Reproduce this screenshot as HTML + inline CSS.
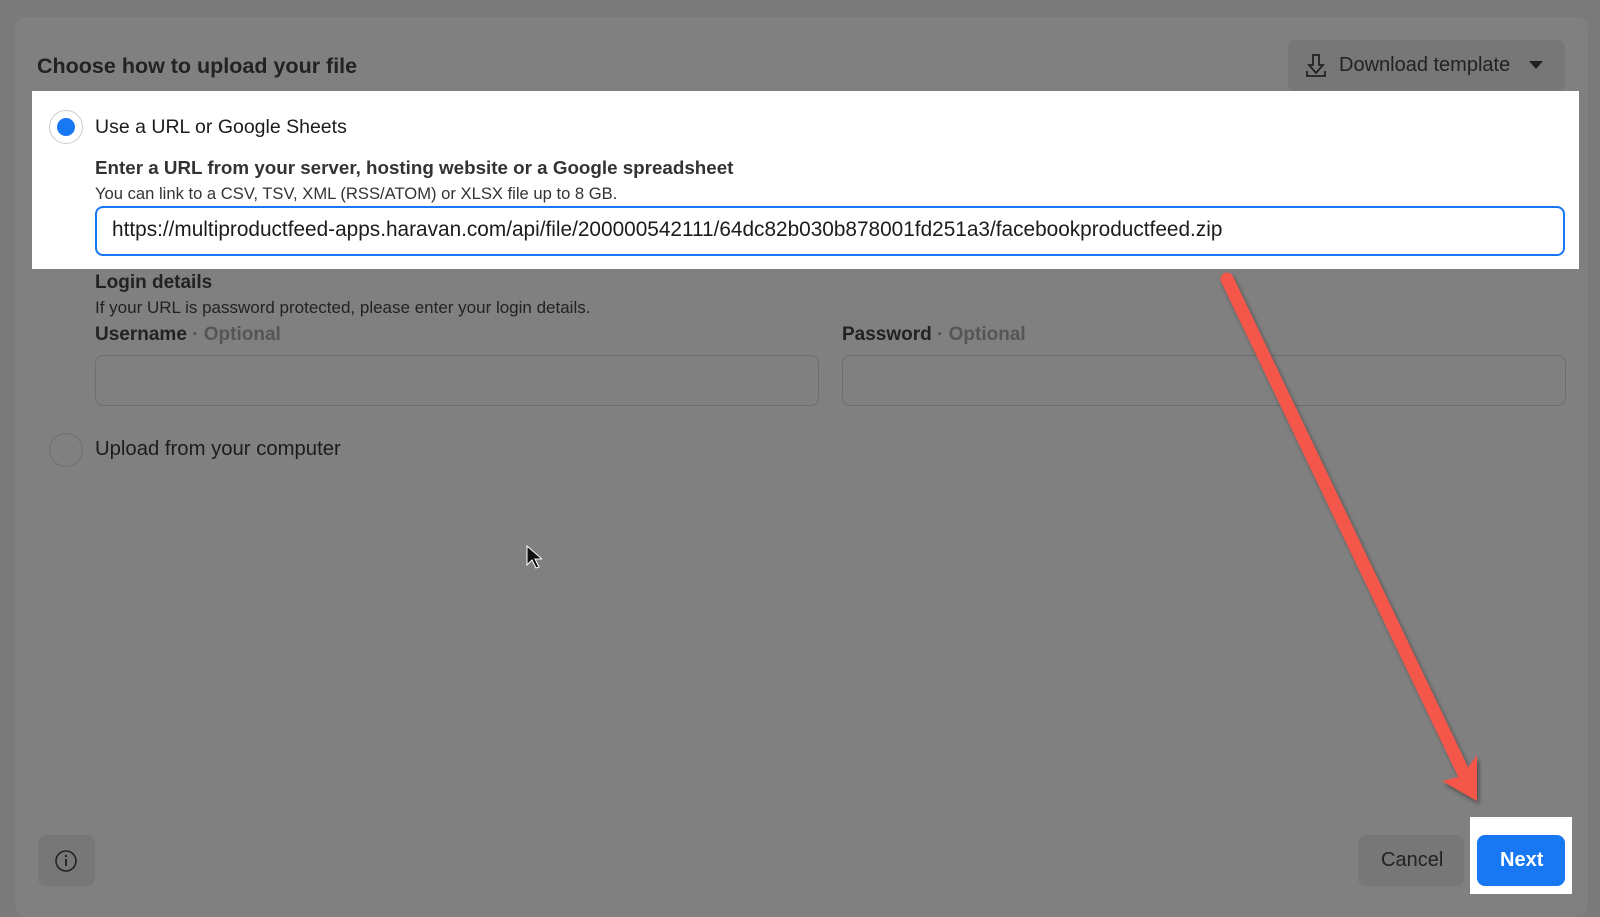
<!DOCTYPE html>
<html><head><meta charset="utf-8"><style>
*{box-sizing:border-box;margin:0;padding:0}
body{width:1600px;height:894px;overflow:hidden;background:#7a7a7a;font-family:"Liberation Sans",Arial,sans-serif;position:relative;color:#1c1c1c}
.panel{position:absolute;left:15px;top:17px;width:1573px;height:900px;background:#808080;border-radius:12px}
.a{position:absolute;white-space:nowrap}
.white{position:absolute;left:32px;top:91px;width:1547px;height:178px;background:#fff}
.radio{position:absolute;width:34px;height:34px;border-radius:50%;border:1.5px solid #ccc}
.inp{position:absolute;border:1.5px solid #6e6e6e;border-radius:8px}
</style></head><body>
<div class="panel"></div>
<div class="a" style="left:37px;top:54px;font-size:21.5px;font-weight:bold;color:#222">Choose how to upload your file</div>
<div class="a" style="left:1288px;top:40px;width:277px;height:51px;background:#777;border-radius:8px"></div>
<svg class="a" style="left:1305px;top:53px" width="22" height="26" viewBox="0 0 22 26"><path d="M8 2h6v10h4l-7 8-7-8h4z" fill="none" stroke="#222" stroke-width="1.8"/><path d="M2 18v5h18v-5" fill="none" stroke="#222" stroke-width="1.8"/></svg>
<div class="a" style="left:1339px;top:54px;font-size:20px;color:#222">Download template</div>
<svg class="a" style="left:1529px;top:61px" width="14" height="9"><path d="M0 0h14L7 8z" fill="#222"/></svg>
<div class="white"></div>
<div class="radio" style="left:49px;top:110px;background:#fff"></div>
<div class="a" style="left:57px;top:118px;width:18px;height:18px;border-radius:50%;background:#1877f2"></div>
<div class="a" style="left:95px;top:116px;font-size:19.5px">Use a URL or Google Sheets</div>
<div class="a" style="left:95px;top:157px;font-size:18.8px;font-weight:bold;color:#333">Enter a URL from your server, hosting website or a Google spreadsheet</div>
<div class="a" style="left:95px;top:184px;font-size:16.6px;color:#333">You can link to a CSV, TSV, XML (RSS/ATOM) or XLSX file up to 8 GB.</div>
<div class="inp" style="left:95px;top:206px;width:1470px;height:50px;border:2px solid #1877f2;background:#fff"></div>
<div class="a" style="left:112px;top:218px;font-size:20.8px">https://multiproductfeed-apps.haravan.com/api/file/200000542111/64dc82b030b878001fd251a3/facebookproductfeed.zip</div>
<div class="a" style="left:95px;top:272px;font-size:19px;font-weight:bold;color:#222">Login details</div>
<div class="a" style="left:95px;top:298px;font-size:17px;color:#222">If your URL is password protected, please enter your login details.</div>
<div class="a" style="left:95px;top:324px;font-size:19px;font-weight:bold;color:#222">Username <span style="color:#555">· Optional</span></div>
<div class="a" style="left:842px;top:324px;font-size:19px;font-weight:bold;color:#222">Password <span style="color:#555">· Optional</span></div>
<div class="inp" style="left:95px;top:355px;width:724px;height:51px"></div>
<div class="inp" style="left:842px;top:355px;width:724px;height:51px"></div>
<div class="radio" style="left:49px;top:433px;border-color:#6e6e6e"></div>
<div class="a" style="left:95px;top:438px;font-size:20.3px">Upload from your computer</div>
<svg class="a" style="left:526px;top:545px" width="16" height="24"><path d="M1 1v19l5-5 4 8 3-1-4-8h7z" fill="#111" stroke="#fff" stroke-width="1"/></svg>
<div class="a" style="left:38px;top:835px;width:57px;height:51px;background:#777;border-radius:8px"></div>
<svg class="a" style="left:54px;top:849px" width="24" height="24"><circle cx="12" cy="12" r="10" fill="none" stroke="#222" stroke-width="1.6"/><path d="M12 10v7" stroke="#222" stroke-width="1.8"/><circle cx="12" cy="7" r="1.2" fill="#222"/></svg>
<div class="a" style="left:1358px;top:835px;width:106px;height:51px;background:#777;border-radius:8px"></div>
<div class="a" style="left:1381px;top:849px;font-size:20px;color:#222">Cancel</div>
<div class="a" style="left:1470px;top:817px;width:102px;height:77px;background:#fff"></div>
<div class="a" style="left:1477px;top:835px;width:88px;height:51px;background:#1877f2;border-radius:8px"></div>
<div class="a" style="left:1500px;top:849px;font-size:20px;font-weight:bold;color:#fff">Next</div>
<svg class="a" style="left:0;top:0" width="1600" height="894">
<defs><filter id="s"><feDropShadow dx="2" dy="3" stdDeviation="2" flood-opacity="0.4"/></filter></defs>
<g filter="url(#s)"><path d="M1227 279L1466 778" stroke="#f4574a" stroke-width="13" stroke-linecap="round"/>
<path d="M1477 801L1442 781L1462 776L1477 755Z" fill="#f4574a"/></g>
</svg>
</body></html>
